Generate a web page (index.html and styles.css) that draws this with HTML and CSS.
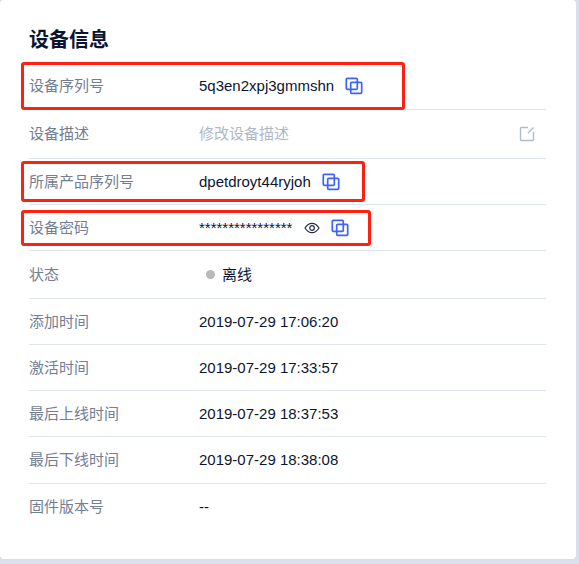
FILE: index.html
```html
<!DOCTYPE html>
<html lang="zh-CN">
<head>
<meta charset="utf-8">
<meta name="viewport" content="width=device-width, initial-scale=1">
<title>设备信息</title>
<link rel="stylesheet" href="styles.css">
</head>
<body>
<svg class="sprite" aria-hidden="true">
  <symbol id="icon-copy" viewBox="0 0 18 18">
    <rect x="1.300" y="1.300" width="11" height="11" rx="1"/>
    <rect x="5.700" y="5.300" width="11" height="11" rx="1"/>
  </symbol>
  <symbol id="icon-eye" viewBox="0 0 16 12">
    <path d="M1 6C3 2.800 5.300 1.300 8 1.300S13 2.800 15 6C13 9.200 10.700 10.700 8 10.700S3 9.200 1 6Z"/>
    <circle cx="8" cy="6" r="2.300"/>
  </symbol>
  <symbol id="icon-edit" viewBox="0 0 16 16">
    <path d="M9 1.500H2.500a1 1 0 0 0-1 1v11a1 1 0 0 0 1 1h11a1 1 0 0 0 1-1V6M9 7l5.500-5.500"/>
  </symbol>
</svg>
<main class="card">
  <h1 class="title">设备信息</h1>
  <dl class="list">
    <div class="row row-first marked marked-serial">
      <dt>设备序列号</dt>
      <dd>5q3en2xpj3gmmshn<button class="icon-button copy" type="button" aria-label="复制设备序列号"><svg><use href="#icon-copy"/></svg></button></dd>
    </div>
    <div class="row row-field">
      <dt><label for="description">设备描述</label></dt>
      <dd><input class="field" id="description" type="text" placeholder="修改设备描述"><button class="icon-button edit" type="button" aria-label="编辑设备描述"><svg><use href="#icon-edit"/></svg></button></dd>
    </div>
    <div class="row marked marked-product">
      <dt>所属产品序列号</dt>
      <dd>dpetdroyt44ryjoh<button class="icon-button copy" type="button" aria-label="复制产品序列号"><svg><use href="#icon-copy"/></svg></button></dd>
    </div>
    <div class="row marked marked-password">
      <dt>设备密码</dt>
      <dd>****************<button class="icon-button eye" type="button" aria-label="显示密码"><svg><use href="#icon-eye"/></svg></button><button class="icon-button copy" type="button" aria-label="复制设备密码"><svg><use href="#icon-copy"/></svg></button></dd>
    </div>
    <div class="row row-status">
      <dt>状态</dt>
      <dd><span class="dot"></span>离线</dd>
    </div>
    <div class="row"><dt>添加时间</dt><dd>2019-07-29 17:06:20</dd></div>
    <div class="row"><dt>激活时间</dt><dd>2019-07-29 17:33:57</dd></div>
    <div class="row"><dt>最后上线时间</dt><dd>2019-07-29 18:37:53</dd></div>
    <div class="row row-first"><dt>最后下线时间</dt><dd>2019-07-29 18:38:08</dd></div>
    <div class="row"><dt>固件版本号</dt><dd>--</dd></div>
  </dl>
</main>
</body>
</html>
```
FILE: styles.css
```css
*,
*::after {
  box-sizing: border-box;
}

body {
  margin: 0;
  padding: 0 3px 5px 0;
  background: #dbdfee;
  color: #0b1531;
  font: 15px/20px "Liberation Sans", "Noto Sans CJK SC", sans-serif;
}

.sprite {
  position: absolute;
  width: 0;
  height: 0;
}

.card {
  padding: 25px 30px 29px 29px;
  border-radius: 4px;
  background: #fff;
  box-shadow: 0 0 2px #d3d6ea;
}

.title {
  margin: 0 0 8px;
  font-size: 20px;
  line-height: 30px;
  font-weight: 700;
}

.list {
  margin: 0;
}

.row {
  position: relative;
  display: flex;
  align-items: center;
  min-height: 46px;
  border-bottom: 1px solid #e0e4ef;
}

.row:last-child {
  border-bottom: 0;
}

.row-first {
  min-height: 47px;
}

.row-field {
  min-height: 49px;
}

.row-status {
  min-height: 48px;
}

dt {
  flex: 0 0 170px;
  color: #737e93;
}

dd {
  display: flex;
  flex: 1;
  align-items: center;
  min-width: 0;
  margin: 0;
}

.field {
  flex: 1;
  min-width: 0;
  padding: 0;
  border: 0;
  outline: 0;
  background: none;
  color: inherit;
  font: inherit;
}

.field::placeholder {
  color: #b0b8c6;
  opacity: 1;
}

.icon-button {
  display: flex;
  flex: none;
  padding: 0;
  border: 0;
  background: none;
  cursor: pointer;
}

.icon-button svg {
  width: 18px;
  height: 18px;
  fill: none;
  stroke: currentColor;
  stroke-width: 1.7;
}

.copy {
  margin-left: 11px;
  color: #3d63fa;
}

.eye {
  margin-left: 12px;
  color: #252c42;
}

.eye svg {
  width: 16px;
  height: 12px;
  stroke-width: 1.2;
}

.edit {
  margin-right: 11px;
  color: #b2bac8;
}

.edit svg {
  width: 16px;
  height: 16px;
  stroke-width: 1.4;
}

.dot {
  width: 9px;
  height: 9px;
  margin: 0 7px;
  border-radius: 50%;
  background: #b9b9b9;
}

/* Red callouts drawn over the highlighted rows */
.marked::after {
  content: "";
  position: absolute;
  left: -8px;
  z-index: 1;
  border: 3px solid #ff2011;
  border-radius: 3px;
  pointer-events: none;
}

.marked-serial::after {
  top: -1px;
  bottom: -1px;
  width: 384px;
}

.marked-product::after {
  top: 2px;
  bottom: 2px;
  width: 344px;
}

.marked-password::after {
  top: 5px;
  bottom: 4px;
  width: 350px;
}
```
